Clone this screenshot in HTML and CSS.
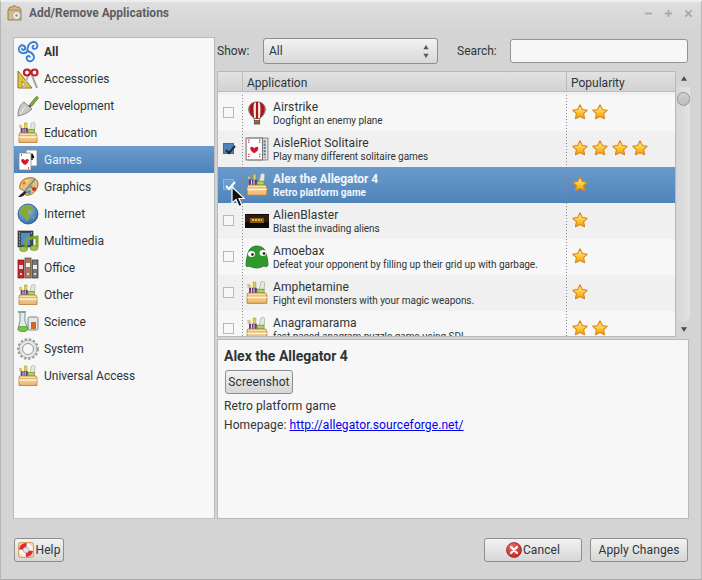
FILE: index.html
```html
<!DOCTYPE html>
<html lang="en">
<head>
<meta charset="utf-8">
<title>Add/Remove Applications</title>
<link rel="stylesheet" href="styles.css">
</head>
<body>
<svg class="defs" width="0" height="0" aria-hidden="true">
<defs>
<linearGradient id="gs" x1="0" y1="0" x2="0" y2="1"><stop offset="0" stop-color="#fff6b0"/><stop offset=".55" stop-color="#fdc72f"/><stop offset="1" stop-color="#f59a1b"/></linearGradient>
<linearGradient id="gb" x1="0" y1="0" x2="0" y2="1"><stop offset="0" stop-color="#fbe6bb"/><stop offset="1" stop-color="#eab266"/></linearGradient>
<radialGradient id="gg" cx=".4" cy=".3" r=".8"><stop offset="0" stop-color="#9cc6f0"/><stop offset="1" stop-color="#2460ad"/></radialGradient>
<radialGradient id="gr" cx=".4" cy=".3" r=".8"><stop offset="0" stop-color="#f07070"/><stop offset="1" stop-color="#b81c1c"/></radialGradient>
<symbol id="i-star" viewBox="0 0 16 16"><path d="M8 .8l2.300 4.700 5 .7-3.700 3.500 1 5.100L8 12.400l-4.600 2.400 1-5.100L.7 6.200l5-.7z" fill="url(#gs)" stroke="#d9861a" stroke-width="1.100" stroke-linejoin="round"/></symbol>
<symbol id="i-all" viewBox="0 0 22 22"><g fill="none" stroke="#3a80d0" stroke-width="1.900"><path d="M10.500 10C9 13 3.500 13 2 9.500.8 6 4 3.500 6.500 4.500 9 5.500 8.500 9 6.300 9 5 9 4.800 7.500 5.500 7"/><path d="M10.500 10C10 6 12 1.500 16 1c3.500-.5 5 3 4 5.300-1 2.200-4.500 2-4.500-.3 0-1.200 1.200-1.500 1.800-1"/><path d="M10.500 10C13 11 16.500 12 17 16c.3 3-3 5-5.500 4-2.500-1-2.500-4.500-.3-5 1.300-.3 2 .8 1.500 1.500"/></g></symbol>
<symbol id="i-acc" viewBox="0 0 22 22"><path d="M1 3l14 17H1z" fill="#e3c23e" stroke="#8d7417"/><path d="M5 13l4 5H5z" fill="#fff6c9" stroke="#8d7417" stroke-width=".7"/><path d="M11 8L7 20M15 8l5 12" fill="none" stroke="#b8bcb8" stroke-width="2"/><path d="M16 9l4 11" stroke="#777" fill="none" stroke-width=".6"/><circle cx="10" cy="4.500" r="3" fill="#fff" stroke="#c21f2b" stroke-width="2.200"/><circle cx="17.500" cy="4.500" r="3" fill="#fff" stroke="#c21f2b" stroke-width="2.200"/></symbol>
<symbol id="i-dev" viewBox="0 0 22 22"><path d="M1 21c0-7 2-11 6-14l8 7c-4 4-9 6-14 7z" fill="#c8c8c6" stroke="#8a8a88"/><path d="M3 19L8 12" stroke="#f2f2f2"/><path d="M12 10l2 2" stroke="#555" stroke-width="2"/><path d="M13 9l6-7c1-1 2.500 0 2 1.500L15 11z" fill="#86ad3c" stroke="#577a22" stroke-width=".8"/></symbol>
<symbol id="i-box" viewBox="0 0 22 22"><rect x="7.500" y="1" width="2.500" height="6" fill="#efd24a" stroke="#a48c1a" stroke-width=".5"/><path d="M2.500 3l.9.500.800-.7.100 1.100 1 .500-1 .500v1.100l-.9-.6-.9.500.300-1.100z" fill="#f5e06a" stroke="#a48c1a" stroke-width=".4"/><rect x="4" y="6.500" width="6.500" height="4.500" fill="#6a3f85" stroke="#3c1c50" stroke-width=".5"/><path d="M6 6.500v4.500M8.200 6.500v4.500" stroke="#eee" stroke-width=".8"/><path d="M13 8l1.500-7c.2-1 3.600-.7 3.600.5L17.500 8z" fill="#e6e6e0" stroke="#a4a49c" stroke-width=".6"/><rect x="11" y="7.500" width="6.500" height="3.500" fill="#a4d858" stroke="#5d8a22" stroke-width=".6"/><path d="M2.500 11h16.500l1 2.500v7h-18V13.500z" fill="url(#gb)" stroke="#b87c30" stroke-width=".8"/><path d="M2 13.800h18" stroke="#c08838" stroke-width=".6"/><path d="M2 15h18" stroke="#fff6e2" stroke-width="1.200"/></symbol>
<symbol id="i-cards" viewBox="0 0 22 22"><rect x="9" y="1" width="11" height="16" rx="1" fill="#fff" stroke="#888" stroke-width=".8"/><path d="M15 4c2 3 3 4 1.500 5.500L15.500 9l.3 2h-1.800l.3-2-1 .500C12 8 13 7 15 4z" fill="#111"/><rect x="2" y="4" width="12" height="17" rx="1" fill="#fff" stroke="#888" stroke-width=".8"/><path d="M8 16c-5-3-4-6-2.500-6 1 0 2 .7 2.500 1.500.5-.8 1.500-1.500 2.500-1.500 1.500 0 2.500 3-2.500 6z" fill="#d5172c"/><path d="M4 6h1M11 19h1" stroke="#d5172c" stroke-width="1.500"/></symbol>
<symbol id="i-gfx" viewBox="0 0 22 22"><path d="M3 9C4 3 11 1 16 2c5 1 6 6 4 10-2 5-7 8-11 7-3-1-1-4-3-5-2-.5-4 0-3-5z" fill="#e7bd78" stroke="#9c6f2c"/><circle cx="10" cy="5" r="1.500" fill="#f4e04a"/><circle cx="16" cy="6" r="1.500" fill="#e8c23a"/><circle cx="12" cy="16" r="2" fill="#3f8fd0"/><circle cx="17" cy="13" r="2" fill="#d82a2a"/><circle cx="7" cy="7" r="1.500" fill="#e07a24"/><circle cx="14" cy="11" r="1.500" fill="#6dae38"/><path d="M18 3L8 15" stroke="#6c8cb0" stroke-width="1.800"/><path d="M8 15l-4 3-3 3c3 .5 6-1 7-3l2-2z" fill="#222"/></symbol>
<symbol id="i-globe" viewBox="0 0 22 22"><circle cx="11" cy="11" r="10" fill="url(#gg)" stroke="#1e4a82" stroke-width=".8"/><path d="M8 2c3 0 7 1 9 4l-2 2-3-1-1 3 3 2-2 4-3 3-1-5-3-2-3-1c0-4 3-6 6-9z" fill="#8aa838"/><path d="M15 14l3-1-1 4z" fill="#8aa838"/></symbol>
<symbol id="i-mm" viewBox="0 0 22 22"><rect x="1" y="1" width="15" height="16" fill="#3c4a58" stroke="#222" stroke-width=".6"/><rect x="4" y="3" width="9" height="12" fill="#4f8cc8"/><path d="M2 3h1M2 6h1M2 9h1M2 12h1M2 15h1M14 3h1" stroke="#ddd"/><path d="M9 9l11-2v10" fill="none" stroke="#7ea52c" stroke-width="3"/><path d="M9 9v10" stroke="#7ea52c" stroke-width="3"/><ellipse cx="6.500" cy="19" rx="4" ry="2.500" fill="#9cc34a" stroke="#5a7d1c" stroke-width=".6"/><ellipse cx="17" cy="18" rx="4" ry="2.500" fill="#9cc34a" stroke="#5a7d1c" stroke-width=".6"/></symbol>
<symbol id="i-off" viewBox="0 0 22 22"><rect x="1" y="3" width="6" height="18" fill="#c9242a" stroke="#7c1015" stroke-width=".7"/><rect x="8" y="1" width="6" height="20" fill="#a47c5e" stroke="#5f4531" stroke-width=".7"/><rect x="15" y="3" width="6" height="18" fill="#777" stroke="#2f2f2f" stroke-width=".7"/><rect x="2" y="8" width="4" height="4" fill="#f2d8d8"/><rect x="9" y="6" width="4" height="4" fill="#eee"/><rect x="16" y="8" width="4" height="4" fill="#eee"/><circle cx="4" cy="17" r="1" fill="#fff"/><circle cx="11" cy="17" r="1" fill="#fff"/><circle cx="18" cy="17" r="1" fill="#fff"/></symbol>
<symbol id="i-sci" viewBox="0 0 22 22"><rect x="11" y="6" width="10" height="13" rx="1.500" fill="#e4e8e8" stroke="#7c8484"/><path d="M14 11h5v7h-5z" fill="#c96a2a"/><path d="M1 1h8" stroke="#5e8a84" stroke-width="1.500"/><path d="M3 2v8L1 18c0 3 9 3 10 0L8 10V2" fill="#e0eee8" stroke="#5e8a84" stroke-width=".9"/><path d="M2 15.500h8l1 3c-1 2.500-9 2.500-10 0z" fill="#74c83e" stroke="#4a8c22" stroke-width=".6"/></symbol>
<symbol id="i-sys" viewBox="0 0 22 22"><circle cx="11" cy="11" r="9.700" fill="none" stroke="#9c9c98" stroke-width="2.400" stroke-dasharray="2.400 1.800"/><circle cx="11" cy="11" r="8.800" fill="#e8e8e6" stroke="#a4a4a0" stroke-width=".8"/><circle cx="11" cy="11" r="5.500" fill="#f7f7f7" stroke="#8c8c88" stroke-width=".9"/></symbol>
<symbol id="i-balloon" viewBox="0 0 22 26"><path d="M11 1C5 1 2 5 2 9.500 2 14 6 17 8 19h6c2-2 6-5 6-9.500C20 5 17 1 11 1z" fill="#f4f0ee" stroke="#3a1010" stroke-width=".7"/><path d="M2.500 9C2.500 5 5 2 8 1.500 7 5 7 13 8 19 5 16 2.500 13 2.500 9zM19.500 9C19.500 5 17 2 14 1.500 15 5 15 13 14 19 17 16 19.500 13 19.500 9zM9.800 1h2.400v18H9.800z" fill="#a81818"/><rect x="8" y="21" width="6" height="4" fill="#8a6a3a" stroke="#4a3518" stroke-width=".6"/><path d="M8 19v2M14 19v2" stroke="#555" stroke-width=".7"/></symbol>
<symbol id="i-sol" viewBox="0 0 22 22"><rect x="3" y="1" width="18" height="20" fill="#e4e4e0" stroke="#8a8a86"/><rect x="1" y="1" width="15" height="20" fill="#fff" stroke="#777"/><path d="M8.500 15c-5-3-4-6-2.500-6 1 0 2 .7 2.500 1.500C9 9.700 10 9 11 9c1.500 0 2.500 3-2.500 6z" fill="#d8162a"/><path d="M3 3h1M13 3h1M3 18h1M13 18h1M3 5h1M13 5h1M3 16h1M13 16h1" stroke="#d8162a" stroke-width="1.200"/><path d="M18 3v16" stroke="#5a7ab0" stroke-width="2" stroke-dasharray="2 1"/></symbol>
<symbol id="i-alien" viewBox="0 0 24 14"><rect width="24" height="14" fill="#0e0a06"/><rect y="1" width="24" height="7" fill="#2e1f10"/><path d="M5 4h14v5H5z" fill="#8a5a1a"/><path d="M7 6h10" stroke="#e8c040" stroke-width="2" stroke-dasharray="2 1"/></symbol>
<symbol id="i-amoeba" viewBox="0 0 24 24"><path d="M12 1c5 0 8 3 9 7 1 4 2 8 2 12 0 2-3 2-4 1-2 1-5 2-7 2-3 0-6-1-8-2-1 1-3 1-3-1 0-4 1-8 2-12C4 4 7 1 12 1z" fill="#2e9a2e" stroke="#166a16" stroke-width=".7"/><ellipse cx="6.500" cy="9" rx="3.500" ry="3" fill="#fff"/><ellipse cx="18" cy="8" rx="3.500" ry="3" fill="#fff"/><circle cx="7.500" cy="9.500" r="1.300" fill="#111"/><circle cx="19" cy="8.500" r="1.300" fill="#111"/></symbol>
<symbol id="i-buoy" viewBox="0 0 16 16"><rect x=".5" y=".5" width="15" height="15" rx="2" fill="#f4cfa0" stroke="#d8a064"/><circle cx="8" cy="8" r="5" fill="none" stroke="#f4f4f4" stroke-width="4"/><circle cx="8" cy="8" r="5" fill="none" stroke="#dc2c2c" stroke-width="4.200" stroke-dasharray="7.850 7.850" stroke-dashoffset="3.900" transform="rotate(45 8 8)"/><circle cx="8" cy="8" r="2.800" fill="#e4e4e4" stroke="#999" stroke-width=".5"/></symbol>
<symbol id="i-cancel" viewBox="0 0 16 16"><circle cx="8" cy="8" r="7.500" fill="url(#gr)" stroke="#9c1c1c" stroke-width=".7"/><path d="M5 5l6 6M11 5l-6 6" stroke="#fff" stroke-width="2.200" stroke-linecap="round"/></symbol>
</defs>
</svg>

<div class="window">
  <header class="titlebar">
    <svg class="title-icon" viewBox="0 0 16 16"><path d="M1 5l2-3h3l1-2 2 2h3l2 3v10H1z" fill="#d9b98a" stroke="#8a6a3a" stroke-width=".8"/><path d="M1 5h13" stroke="#8a6a3a" stroke-width=".6"/><circle cx="9.500" cy="10.500" r="4" fill="#ececec" stroke="#888" stroke-width=".6"/><circle cx="9.500" cy="10.500" r="1.200" fill="#888"/></svg>
    <span class="title-text">Add/Remove Applications</span>
    <span class="winbtns">
      <svg viewBox="0 0 10 10"><path d="M1 5h8" stroke="#a9a9a9" stroke-width="2"/></svg>
      <svg viewBox="0 0 10 10"><path d="M1 5h8M5 1v8" stroke="#a9a9a9" stroke-width="2"/></svg>
      <svg viewBox="0 0 10 10"><path d="M1.500 1.500l7 7M8.500 1.500l-7 7" stroke="#a9a9a9" stroke-width="2"/></svg>
    </span>
  </header>

  <main class="main">
    <nav class="sidebar">
      <div class="cat cat-bold"><svg class="cat-icon"><use href="#i-all"/></svg>All</div>
      <div class="cat"><svg class="cat-icon"><use href="#i-acc"/></svg>Accessories</div>
      <div class="cat"><svg class="cat-icon"><use href="#i-dev"/></svg>Development</div>
      <div class="cat"><svg class="cat-icon"><use href="#i-box"/></svg>Education</div>
      <div class="cat cat-on"><svg class="cat-icon"><use href="#i-cards"/></svg>Games</div>
      <div class="cat"><svg class="cat-icon"><use href="#i-gfx"/></svg>Graphics</div>
      <div class="cat"><svg class="cat-icon"><use href="#i-globe"/></svg>Internet</div>
      <div class="cat"><svg class="cat-icon"><use href="#i-mm"/></svg>Multimedia</div>
      <div class="cat"><svg class="cat-icon"><use href="#i-off"/></svg>Office</div>
      <div class="cat"><svg class="cat-icon"><use href="#i-box"/></svg>Other</div>
      <div class="cat"><svg class="cat-icon"><use href="#i-sci"/></svg>Science</div>
      <div class="cat"><svg class="cat-icon"><use href="#i-sys"/></svg>System</div>
      <div class="cat"><svg class="cat-icon"><use href="#i-box"/></svg>Universal Access</div>
    </nav>

    <section class="content">
      <div class="filters">
        <span class="lbl lbl-show">Show:</span>
        <div class="combo"><span>All</span>
          <svg class="updown" viewBox="0 0 7 15"><path d="M3.500 0l3 5h-6z" fill="#555"/><path d="M3.500 15l3-5h-6z" fill="#555"/></svg>
        </div>
        <span class="lbl lbl-search">Search:</span>
        <div class="search"></div>
      </div>

      <div class="listwrap">
        <div class="list">
          <div class="thead">
            <div class="th th-check"></div>
            <div class="th th-app">Application</div>
            <div class="th th-pop">Popularity</div>
          </div>
          <div class="tbody">
            <div class="sliver"></div>
            <div class="row">
              <div class="c-check"><span class="check"></span></div>
              <div class="c-app"><svg class="app-icon"><use href="#i-balloon"/></svg><div class="app-text"><div class="name">Airstrike</div><div class="desc">Dogfight an enemy plane</div></div></div>
              <div class="c-pop"><svg class="star"><use href="#i-star"/></svg><svg class="star"><use href="#i-star"/></svg></div>
            </div>
            <div class="row row-alt">
              <div class="c-check"><span class="check check-on"><svg viewBox="0 0 12 12"><path d="M2 6l3 3 6-7" fill="none" stroke="#1f2a36" stroke-width="2"/></svg></span></div>
              <div class="c-app"><svg class="app-icon"><use href="#i-sol"/></svg><div class="app-text"><div class="name">AisleRiot Solitaire</div><div class="desc">Play many different solitaire games</div></div></div>
              <div class="c-pop"><svg class="star"><use href="#i-star"/></svg><svg class="star"><use href="#i-star"/></svg><svg class="star"><use href="#i-star"/></svg><svg class="star"><use href="#i-star"/></svg></div>
            </div>
            <div class="row row-sel">
              <div class="c-check"><span class="check check-sel"><svg viewBox="0 0 12 12"><path d="M2 6l3 3 6-7" fill="none" stroke="#fff" stroke-width="2"/></svg></span></div>
              <div class="c-app"><svg class="app-icon"><use href="#i-box"/></svg><div class="app-text"><div class="name">Alex the Allegator 4</div><div class="desc">Retro platform game</div></div></div>
              <div class="c-pop"><svg class="star"><use href="#i-star"/></svg></div>
            </div>
            <div class="row row-alt">
              <div class="c-check"><span class="check"></span></div>
              <div class="c-app"><svg class="app-icon"><use href="#i-alien"/></svg><div class="app-text"><div class="name">AlienBlaster</div><div class="desc">Blast the invading aliens</div></div></div>
              <div class="c-pop"><svg class="star"><use href="#i-star"/></svg></div>
            </div>
            <div class="row">
              <div class="c-check"><span class="check"></span></div>
              <div class="c-app"><svg class="app-icon"><use href="#i-amoeba"/></svg><div class="app-text"><div class="name">Amoebax</div><div class="desc">Defeat your opponent by filling up their grid up with garbage.</div></div></div>
              <div class="c-pop"><svg class="star"><use href="#i-star"/></svg></div>
            </div>
            <div class="row row-alt">
              <div class="c-check"><span class="check"></span></div>
              <div class="c-app"><svg class="app-icon"><use href="#i-box"/></svg><div class="app-text"><div class="name">Amphetamine</div><div class="desc">Fight evil monsters with your magic weapons.</div></div></div>
              <div class="c-pop"><svg class="star"><use href="#i-star"/></svg></div>
            </div>
            <div class="row">
              <div class="c-check"><span class="check"></span></div>
              <div class="c-app"><svg class="app-icon"><use href="#i-box"/></svg><div class="app-text"><div class="name">Anagramarama</div><div class="desc">fast paced anagram puzzle game using SDL</div></div></div>
              <div class="c-pop"><svg class="star"><use href="#i-star"/></svg><svg class="star"><use href="#i-star"/></svg></div>
            </div>
          </div>
        </div>
        <div class="scrollbar">
          <svg class="arrow" viewBox="0 0 8 6"><path d="M4 0l4 6H0z" fill="#4a4a4a"/></svg>
          <div class="trough"><div class="thumb"></div></div>
          <svg class="arrow" viewBox="0 0 8 6"><path d="M4 6l4-6H0z" fill="#4a4a4a"/></svg>
        </div>
      </div>

      <div class="details">
        <h1 class="d-title">Alex the Allegator 4</h1>
        <button class="btn btn-shot">Screenshot</button>
        <p class="d-line">Retro platform game</p>
        <p class="d-line">Homepage: <a class="d-link" href="#">http://allegator.sourceforge.net/</a></p>
      </div>
    </section>
  </main>

  <footer class="footer">
    <button class="btn btn-help"><svg class="btn-icon"><use href="#i-buoy"/></svg>Help</button>
    <span class="spacer"></span>
    <button class="btn btn-wide"><svg class="btn-icon"><use href="#i-cancel"/></svg>Cancel</button>
    <button class="btn btn-wide">Apply Changes</button>
  </footer>

  <svg class="cursor" viewBox="0 0 14 22"><path d="M1 1v16l4-3.500 3 7 3-1.300-3-6.700h5.500z" fill="#111" stroke="#fff" stroke-width="1.200"/></svg>
</div>
</body>
</html>
```
FILE: styles.css
```css
* { box-sizing: border-box; }
html, body { margin: 0; padding: 0; }
body { width: 702px; height: 580px; overflow: hidden; font: 12px/14px Roboto, "Liberation Sans", sans-serif; color: #2e3436; }
.defs { position: absolute; }

.window { position: relative; width: 702px; height: 580px; display: flex; flex-direction: column; background: #d4d4d4; border: 1px solid #b6b6b6; border-top: 2px solid #eeeeee; border-bottom-color: #a8a8a8; }

.titlebar { height: 28px; flex: none; display: flex; align-items: center; padding: 0 8px 6px 6px; background: linear-gradient(#dedede, #d4d4d4); }
.title-icon { width: 16px; height: 16px; flex: none; }
.title-text { margin-left: 6px; font-weight: 700; color: #5e5e5e; }
.winbtns { margin-left: auto; display: flex; gap: 11px; }
.winbtns svg { width: 9px; height: 9px; display: block; }

.main { height: 482px; flex: none; margin-top: 7px; padding: 0 12px; display: flex; gap: 2px; }

.sidebar { width: 202px; flex: none; background: #f7f7f7; border: 1px solid #b9b9b9; border-bottom-color: #c4c4c4; }
.cat { height: 27px; display: flex; align-items: center; gap: 5px; padding-left: 3px; color: #2e3436; }
.cat-bold { font-weight: 700; }
.cat-on { background: linear-gradient(#6b9bcd, #4d83ba); color: #eef3f9; }
.cat-icon { width: 22px; height: 22px; flex: none; }

.content { width: 472px; flex: none; display: flex; flex-direction: column; }

.filters { height: 27px; flex: none; padding-top: 1px; display: flex; align-items: center; }
.lbl { color: #2e3436; }
.lbl-show { width: 46px; }
.combo { width: 175px; height: 26px; display: flex; align-items: center; justify-content: space-between; padding: 0 8px 0 5px; border: 1px solid #8e8e8e; border-radius: 3px; background: linear-gradient(#f2f2f2, #d8d8d8); }
.updown { width: 6px; height: 15px; }
.lbl-search { margin-left: 19px; width: 53px; }
.search { width: 178px; height: 24px; border: 1px solid #929292; border-radius: 3px; background: #f7f7f7; }

.listwrap { height: 266px; flex: none; margin-top: 7px; display: flex; }
.list { width: 459px; flex: none; display: flex; flex-direction: column; border: 1px solid #b9b9b9; background: #f7f7f7; overflow: hidden; }

.thead { height: 20px; flex: none; display: flex; background: linear-gradient(#e2e2e2, #d2d2d2); border-bottom: 1px solid #bcbcbc; }
.th { display: flex; align-items: center; padding: 2px 0 0 4px; color: #2e3436; border-right: 1px solid #bcbcbc; }
.th-check { width: 25px; }
.th-app { width: 324px; }
.th-pop { flex: 1; border-right: 0; }

.tbody { flex: 1; overflow: hidden; }
.sliver { height: 3px; background: #f0f0f0; }
.row { height: 36px; display: flex; background: #f7f7f7; }
.row-alt { background: #f0f0f0; }
.row-sel { background: linear-gradient(#6a9acc, #4f84bb); color: #fff; }

.c-check, .c-app { background-image: repeating-linear-gradient(#8c8c8c 0 1px, transparent 1px 3px); background-size: 1px 100%; background-position: right top; background-repeat: no-repeat; }
.c-check { width: 25px; flex: none; display: flex; align-items: center; padding: 0 0 2px 5px; }
.c-app { width: 324px; flex: none; display: flex; align-items: center; padding-left: 2px; }
.c-pop { flex: 1; display: flex; align-items: center; gap: 4px; padding: 0 0 2px 5px; }

.check { width: 11px; height: 11px; display: block; border: 1px solid #b8b8b8; background: #f7f7f7; }
.check svg { display: block; width: 12px; height: 12px; overflow: visible; }
.check-on { background: #4f82b8; border-color: #3b6a9c; }
.check-sel { background: #6c9ccc; border-color: #8fb4d8; }

.app-icon { width: 24px; height: 24px; flex: none; margin-right: 4px; }
.app-text { min-width: 0; padding-top: 1px; white-space: nowrap; }
.name { font-size: 12px; line-height: 14px; letter-spacing: .1px; }
.desc { font-size: 10px; line-height: 13px; letter-spacing: -.04px; }
.row-sel .name { font-weight: 700; color: #f2f6fb; letter-spacing: -.05px; }
.row-sel .desc { font-weight: 700; color: #f2f6fb; letter-spacing: 0; }

.star { width: 16px; height: 16px; flex: none; }

.scrollbar { width: 13px; margin-left: 1px; flex: none; display: flex; flex-direction: column; align-items: center; }
.arrow { width: 6px; height: 5px; flex: none; margin: 5px 0; }
.trough { width: 13px; height: 235px; margin-top: 1px; flex: none; background: linear-gradient(90deg, #d8d8d8, #e2e2e2); border-radius: 0 0 6px 6px; }
.thumb { width: 13px; height: 14px; margin-top: 5px; border: 1px solid #959595; border-radius: 7px; background: linear-gradient(#d0d0d0, #bcbcbc); }

.details { height: 180px; flex: none; margin-top: 2px; padding: 8px 6px 0; background: #f7f7f7; border: 1px solid #b9b9b9; }
.d-title { margin: 0; font-size: 14px; line-height: 17px; font-weight: 700; color: #2e3436; }
.d-line { margin: 5px 0 0; line-height: 14px; letter-spacing: .09px; }
.d-link { color: #0000ee; text-decoration: underline; }

.btn { font: inherit; letter-spacing: .1px; color: #2e3436; height: 24px; display: flex; align-items: center; justify-content: center; padding: 0; border: 1px solid #8e8e8e; border-radius: 3px; background: linear-gradient(#f2f2f2, #d6d6d6); }
.btn-shot { width: 68px; margin: 5px 0 0 1px; }
.btn-help { width: 50px; gap: 2px; }
.btn-wide { width: 98px; gap: 1px; }
.btn-wide + .btn-wide { margin-left: 8px; }
.btn-icon { width: 16px; height: 16px; flex: none; }

.footer { flex: none; display: flex; padding: 19px 13px 0; }
.spacer { flex: 1; }

.cursor { position: absolute; left: 230px; top: 184px; width: 14px; height: 22px; }
```
